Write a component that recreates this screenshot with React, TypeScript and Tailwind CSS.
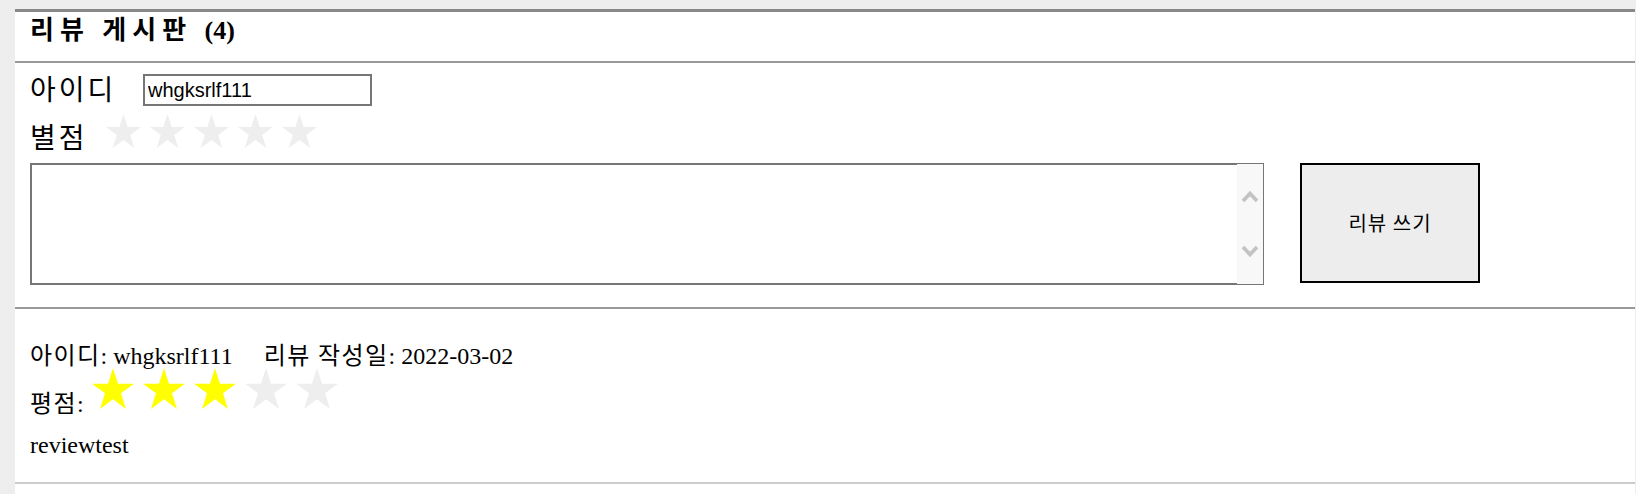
import React from 'react';

interface Review {
  id: string;
  date: string;
  rating: number;
  content: string;
}

const reviews: Review[] = [
  { id: 'whgksrlf111', date: '2022-03-02', rating: 3, content: 'reviewtest' },
];

function Star({ on, big }: { on: boolean; big?: boolean }) {
  return (
    <svg
      className={big ? 'w-[42px] h-[41px]' : 'w-[35px] h-[34px]'}
      viewBox="1.35 1.4 21.3 20.26"
      preserveAspectRatio="none"
    >
      <polygon
        points="12,1.4 14.52,9.14 22.65,9.14 16.07,13.92 18.58,21.66 12,16.88 5.42,21.66 7.93,13.92 1.35,9.14 9.48,9.14"
        fill={on ? '#ffff00' : '#eeeeee'}
      />
    </svg>
  );
}

function Chevron({ up }: { up?: boolean }) {
  return (
    <svg className="w-[18px] h-[13px]" viewBox="0 0 18 13">
      <polyline
        points={up ? '2,11 9,3.5 16,11' : '2,2 9,9.5 16,2'}
        fill="none"
        stroke="#c3c3c3"
        strokeWidth="3.8"
      />
    </svg>
  );
}

export default function App() {
  return (
    <div className="h-screen overflow-hidden bg-[#eeeeee] pt-[9px] pl-[15px] pr-px font-['Liberation_Serif','Noto_Sans_CJK_KR',serif] text-black">
      <div className="h-full bg-white border-t-[3px] border-[#888888]">
        <h2 className="h-[51px] border-b-2 border-[#999999] px-[15px] pt-[4px] text-[26px] font-bold leading-[29px] tracking-[6px]">
          리뷰 게시판 <span className="tracking-normal">(4)</span>
        </h2>

        {/* write form */}
        <div className="border-b-2 border-[#999999] px-[15px] pt-[9px] pb-[22px]">
          <div className="flex items-start">
            <span className="w-[113px] font-['Noto_Sans_CJK_KR',sans-serif] text-[28px] leading-[32px] tracking-[3px]">
              아이디
            </span>
            <input
              className="mt-[2px] h-[32px] w-[229px] border-2 border-[#767676] px-[3px] font-['Liberation_Sans',sans-serif] text-[20px] outline-none"
              defaultValue="whgksrlf111"
            />
          </div>
          <div className="mt-[9px] flex items-start">
            <span className="mt-[5px] w-[76px] font-['Noto_Sans_CJK_KR',sans-serif] text-[28px] leading-[32px] tracking-[3px]">
              별점
            </span>
            <div className="-mt-px flex gap-[9px]">
              {[0, 1, 2, 3, 4].map((i) => (
                <Star key={i} on={false} />
              ))}
            </div>
          </div>
          <div className="mt-[11px] flex items-start">
            <div className="flex h-[122px] w-[1234px]">
              <textarea className="flex-1 resize-none border-2 border-r-0 border-[#767676] outline-none" />
              <div className="flex w-[27px] flex-col items-center justify-between border border-l-0 border-[#767676] bg-[#f8f8f8] py-[26px]">
                <Chevron up />
                <Chevron />
              </div>
            </div>
            <button className="ml-[36px] h-[120px] w-[180px] border-2 border-black bg-[#ededed] font-['Noto_Sans_CJK_KR',sans-serif] text-[20px] tracking-[1px]">
              리뷰 쓰기
            </button>
          </div>
        </div>

        {/* review list */}
        {reviews.map((r) => (
          <div key={r.id} className="border-b-2 border-[#cccccc] px-[15px] pt-[34px] pb-[23px] text-[24px]">
            <div className="leading-[27px]">
              <span className="tracking-[1.4px]">아이디</span>: {r.id}
              <span className="ml-[31px]">
                <span className="tracking-[1.4px]">리뷰 작성일</span>: {r.date}
              </span>
            </div>
            <div className="-mt-[2px] flex items-end">
              <span className="w-[62px] leading-[27px] tracking-[1.4px]">평점:</span>
              <div className="mb-[9px] flex gap-[9px]">
                {[1, 2, 3, 4, 5].map((n) => (
                  <Star key={n} big on={n <= r.rating} />
                ))}
              </div>
            </div>
            <div className="mt-[14px] leading-[27px]">{r.content}</div>
          </div>
        ))}
      </div>
    </div>
  );
}
